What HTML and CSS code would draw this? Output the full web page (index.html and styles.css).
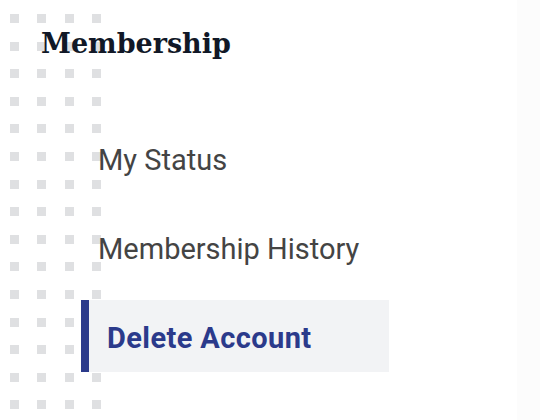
FILE: index.html
```html
<!DOCTYPE html>
<html lang="en">
<head>
<meta charset="utf-8">
<title>Membership</title>
<link rel="stylesheet" href="styles.css">
</head>
<body>
<div class="page">
  <aside class="sidebar">
    <div class="dots" aria-hidden="true">
      <i></i><i></i><i></i><i></i><i></i><i></i><i></i><i></i><i></i><i></i>
      <i></i><i></i><i></i><i></i><i></i><i></i><i></i><i></i><i></i><i></i>
      <i></i><i></i><i></i><i></i><i></i><i></i><i></i><i></i><i></i><i></i>
      <i></i><i></i><i></i><i></i><i></i><i></i><i></i><i></i><i></i><i></i>
      <i></i><i></i><i></i><i></i><i></i><i></i><i></i><i></i><i></i><i></i>
      <i></i><i></i><i></i><i></i><i></i><i></i><i></i><i></i><i></i><i></i>
    </div>
    <h2 class="title">Membership</h2>
    <ul class="menu">
      <li class="item">My Status</li>
      <li class="item">Membership History</li>
      <li class="item active">Delete Account</li>
    </ul>
  </aside>
  <div class="edge"></div>
</div>
</body>
</html>
```
FILE: styles.css
```css
html, body {
  margin: 0;
  padding: 0;
  background: #ffffff;
}
.page {
  display: flex;
  width: 540px;
  height: 420px;
  overflow: hidden;
}
.sidebar {
  position: relative;
  flex: 1;
  padding: 24px 0 0 41px;
}
.edge {
  width: 23px;
  background: #fcfcfc;
}
.dots {
  position: absolute;
  left: 10px;
  top: 14px;
  display: grid;
  grid-template-columns: repeat(4, 9px);
  grid-auto-rows: 9px;
  column-gap: 18.4px;
  row-gap: 18.6px;
  z-index: 0;
}
.dots i {
  display: block;
  width: 9px;
  height: 9px;
  background: #dfe0e2;
}
.title {
  position: relative;
  z-index: 1;
  margin: 0;
  font-family: "DejaVu Serif", "Liberation Serif", serif;
  font-weight: 700;
  font-size: 27px;
  line-height: 40px;
  color: #111827;
}
.menu {
  position: relative;
  z-index: 1;
  list-style: none;
  margin: 58px 0 0 40px;
  padding: 0;
  display: flex;
  flex-direction: column;
  gap: 17px;
  width: 308px;
}
.item {
  height: 72px;
  box-sizing: border-box;
  padding-top: 4px;
  display: flex;
  align-items: center;
  padding-left: 17px;
  font-family: Roboto, "Liberation Sans", sans-serif;
  font-size: 29px;
  color: #444444;
}
.item.active {
  padding-left: 18px;
  border-left: 8px solid #2b3a8b;
  background: #f2f3f5;
  color: #2b3a8b;
  font-weight: 700;
  letter-spacing: 0.4px;
}
```
